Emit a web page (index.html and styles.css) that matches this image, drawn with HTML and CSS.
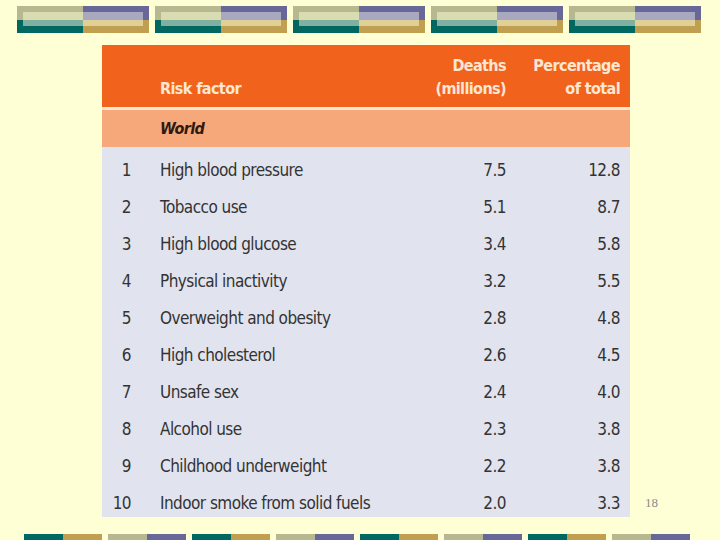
FILE: index.html
```html
<!DOCTYPE html>
<html>
<head>
<meta charset="utf-8">
<link rel="stylesheet" href="styles.css">
</head>
<body>
<div class="top-bars">
  <div class="tblock"><div class="q q-tl"></div><div class="q q-tr"></div><div class="q q-bl"></div><div class="q q-br"></div></div>
  <div class="tblock"><div class="q q-tl"></div><div class="q q-tr"></div><div class="q q-bl"></div><div class="q q-br"></div></div>
  <div class="tblock"><div class="q q-tl"></div><div class="q q-tr"></div><div class="q q-bl"></div><div class="q q-br"></div></div>
  <div class="tblock"><div class="q q-tl"></div><div class="q q-tr"></div><div class="q q-bl"></div><div class="q q-br"></div></div>
  <div class="tblock"><div class="q q-tl"></div><div class="q q-tr"></div><div class="q q-bl"></div><div class="q q-br"></div></div>
</div>

<div class="main">
  <div class="risk-table">
    <div class="thead">
      <div class="num"></div>
      <div class="name">Risk factor</div>
      <div class="deaths">Deaths<br>(millions)</div>
      <div class="pct">Percentage<br>of total</div>
    </div>
    <div class="divider"></div>
    <div class="region">World</div>
    <div class="tbody">
      <div class="row"><div class="num">1</div><div class="name">High blood pressure</div><div class="deaths">7.5</div><div class="pct">12.8</div></div>
      <div class="row"><div class="num">2</div><div class="name">Tobacco use</div><div class="deaths">5.1</div><div class="pct">8.7</div></div>
      <div class="row"><div class="num">3</div><div class="name">High blood glucose</div><div class="deaths">3.4</div><div class="pct">5.8</div></div>
      <div class="row"><div class="num">4</div><div class="name">Physical inactivity</div><div class="deaths">3.2</div><div class="pct">5.5</div></div>
      <div class="row"><div class="num">5</div><div class="name">Overweight and obesity</div><div class="deaths">2.8</div><div class="pct">4.8</div></div>
      <div class="row"><div class="num">6</div><div class="name">High cholesterol</div><div class="deaths">2.6</div><div class="pct">4.5</div></div>
      <div class="row"><div class="num">7</div><div class="name">Unsafe sex</div><div class="deaths">2.4</div><div class="pct">4.0</div></div>
      <div class="row"><div class="num">8</div><div class="name">Alcohol use</div><div class="deaths">2.3</div><div class="pct">3.8</div></div>
      <div class="row"><div class="num">9</div><div class="name">Childhood underweight</div><div class="deaths">2.2</div><div class="pct">3.8</div></div>
      <div class="row"><div class="num">10</div><div class="name">Indoor smoke from solid fuels</div><div class="deaths">2.0</div><div class="pct">3.3</div></div>
    </div>
  </div>
  <div class="page-num">18</div>
</div>

<div class="bottom-bars">
  <div class="bgroup g-a"><span></span><span></span></div>
  <div class="bgroup g-b"><span></span><span></span></div>
  <div class="bgroup g-a"><span></span><span></span></div>
  <div class="bgroup g-b"><span></span><span></span></div>
  <div class="bgroup g-a"><span></span><span></span></div>
  <div class="bgroup g-b"><span></span><span></span></div>
  <div class="bgroup g-a"><span></span><span></span></div>
  <div class="bgroup g-b"><span></span><span></span></div>
</div>
</body>
</html>
```

FILE: styles.css
```css
html, body {
  margin: 0;
  padding: 0;
}
body {
  width: 720px;
  height: 540px;
  overflow: hidden;
  background: #ffffd6;
  font-family: "DejaVu Sans Condensed", "Liberation Sans", sans-serif;
}

/* top decorative bars */
.top-bars {
  display: flex;
  gap: 6px;
  padding: 6px 0 0 17px;
  height: 27px;
}
.tblock {
  width: 132px;
  height: 27px;
  display: grid;
  grid-template-columns: 66px 66px;
  grid-template-rows: 14px 13px;
}
.q { box-sizing: border-box; }
.q-tl { background: #d8dcb0; border-style: solid; border-color: #b8b890; border-width: 6px 0 0 6px; }
.q-tr { background: #a8a8c0; border-style: solid; border-color: #686898; border-width: 6px 6px 0 0; }
.q-bl { background: #80b0a0; border-style: solid; border-color: #006860; border-width: 0 0 7px 6px; }
.q-br { background: #e0d098; border-style: solid; border-color: #c0a050; border-width: 0 6px 7px 0; }

/* main area */
.main {
  display: flex;
  align-items: flex-end;
  margin-top: 12px;
  padding-left: 102px;
  height: 472px;
}
.risk-table {
  width: 528px;
  height: 472px;
  display: flex;
  flex-direction: column;
  background: #e1e4ef;
  color: #333333;
  font-size: 17px;
  letter-spacing: -0.55px;
}
.thead, .row {
  display: flex;
  padding-right: 10px;
}
.num {
  width: 29px;
  text-align: right;
}
.name {
  width: 260px;
  margin-left: 29px;
  white-space: nowrap;
}
.deaths {
  width: 86px;
  text-align: right;
}
.pct {
  width: 114px;
  text-align: right;
}
.thead {
  height: 62px;
  box-sizing: border-box;
  background: #f1621d;
  color: #fde6d2;
  font-weight: bold;
  font-size: 16px;
  letter-spacing: -0.6px;
  align-items: flex-end;
  padding-bottom: 7px;
  line-height: 23px;
}
.divider {
  height: 3px;
  background: #fbe6cf;
}
.region {
  height: 37px;
  background: #f6a87b;
  color: #2e1a10;
  font-weight: bold;
  font-style: italic;
  font-size: 16px;
  letter-spacing: -0.6px;
  padding-left: 58px;
  line-height: 38px;
}
.tbody {
  flex: 1;
}
.row {
  height: 37px;
  line-height: 46px;
}

.page-num {
  margin-left: 15px;
  margin-bottom: 6px;
  font-family: "Liberation Serif", serif;
  font-size: 13px;
  color: #8a8a8a;
}

/* bottom decorative bars */
.bottom-bars {
  display: flex;
  gap: 6px;
  padding-left: 24px;
  margin-top: 17px;
}
.bgroup {
  display: flex;
  height: 6px;
}
.bgroup span {
  width: 39px;
  height: 6px;
}
.g-a span:first-child { background: #006860; }
.g-a span:last-child { background: #c0a050; }
.g-b span:first-child { background: #b8b890; }
.g-b span:last-child { background: #686898; }
```
